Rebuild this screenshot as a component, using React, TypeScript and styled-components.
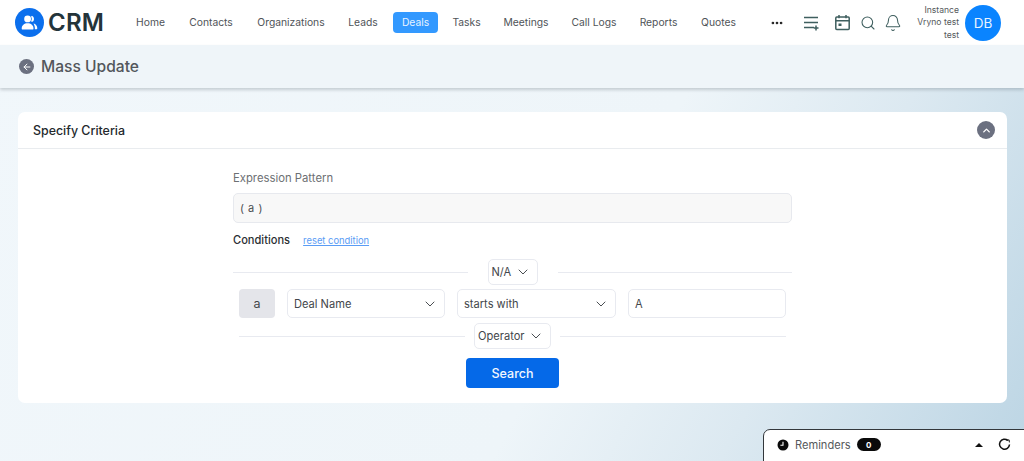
import React from 'react';
import styled, { createGlobalStyle } from 'styled-components';
import { ArrowLeft, Bell, ChevronDown, ChevronUp, MoreHorizontal, Search } from 'lucide-react';

const FONT = '"Inter", "Noto Sans", "Liberation Sans", sans-serif';

const GlobalStyle = createGlobalStyle`
  html, body { margin: 0; padding: 0; height: 100%; }
  body { font-family: ${FONT}; overflow: hidden; }
  * { box-sizing: border-box; }
`;

const Page = styled.div`
  position: relative;
  width: 1024px;
  height: 461px;
  overflow: hidden;
  background: linear-gradient(118deg, #f1f7fb 0%, #eef5f9 58%, #dce9f1 76%, #bcd5e4 100%);
`;

const Header = styled.header`
  display: flex;
  align-items: center;
  height: 45px;
  background: #fff;
  padding-left: 15px;
`;

const Brand = styled.div`
  display: flex;
  align-items: center;
  gap: 4px;
  width: 113px;
`;

const LogoMark = styled.div`
  width: 29px;
  height: 29px;
  border-radius: 50%;
  background: #0b6fed;
  display: flex;
  align-items: center;
  justify-content: center;
`;

const BrandName = styled.span`
  font-size: 24px;
  font-weight: 600;
  color: #24343a;
  letter-spacing: 0.2px;
`;

const Nav = styled.nav`
  display: flex;
  align-items: center;
  gap: 8px;
`;

const NavItem = styled.a<{ $active?: boolean; $w: number }>`
  display: flex;
  align-items: center;
  justify-content: center;
  width: ${({ $w }) => $w}px;
  height: 21px;
  padding-bottom: 1px;
  border-radius: 4px;
  font-size: 10.3px;
  white-space: nowrap;
  color: ${({ $active }) => ($active ? '#e8f3ff' : '#4f5458')};
  background: ${({ $active }) => ($active ? '#3399ff' : 'transparent')};
`;

const Tools = styled.div`
  display: flex;
  align-items: center;
  margin-left: 27px;
  color: #3f5f5f;
`;

const ToolIcon = styled.span<{ $gap: number }>`
  display: flex;
  margin-right: ${({ $gap }) => $gap}px;
`;

const UserName = styled.div`
  width: 57px;
  text-align: right;
  font-size: 8.6px;
  line-height: 12.5px;
  color: #55595c;
`;

const Avatar = styled.div`
  width: 36px;
  height: 36px;
  margin-left: 6px;
  border-radius: 50%;
  background: #0a84ff;
  color: #e8f3ff;
  font-size: 13.5px;
  display: flex;
  align-items: center;
  justify-content: center;
`;

const SubHeader = styled.div`
  display: flex;
  align-items: center;
  gap: 7px;
  height: 43px;
  padding-left: 19px;
  background: #eff5f9;
  box-shadow: 0 2px 3px rgba(90, 100, 110, 0.28);
`;

const BackButton = styled.div`
  width: 15px;
  height: 15px;
  border-radius: 50%;
  background: #6b7080;
  color: #fff;
  display: flex;
  align-items: center;
  justify-content: center;
`;

const Title = styled.h1`
  margin: 0;
  font-size: 15.6px;
  font-weight: 500;
  color: #53575c;
`;

const Card = styled.section`
  margin: 24px 17px 0 18px;
  height: 291px;
  background: #fff;
  border-radius: 7px;
`;

const CardHead = styled.div`
  display: flex;
  align-items: center;
  justify-content: space-between;
  height: 37px;
  padding: 0 12px 0 15px;
  border-bottom: 1px solid #e9ecef;
`;

const CardTitle = styled.h2`
  margin: 0;
  font-size: 12.4px;
  font-weight: 500;
  color: #23282c;
`;

const Collapse = styled.div`
  width: 18px;
  height: 18px;
  border-radius: 50%;
  background: #6b7080;
  color: #fff;
  display: flex;
  align-items: center;
  justify-content: center;
`;

const Form = styled.div`
  width: 559px;
  margin-left: 215px;
  padding-top: 22px;
`;

const FieldLabel = styled.div`
  font-size: 11.3px;
  line-height: 14px;
  color: #6d7073;
`;

const PatternBox = styled.div`
  display: flex;
  align-items: center;
  height: 30px;
  margin-top: 8px;
  padding-left: 6px;
  border: 1px solid #e7e9ee;
  border-radius: 5px;
  background: #f8f8f8;
  font-size: 11px;
  color: #4b4f52;
  word-spacing: 1px;
`;

const ConditionsHead = styled.div`
  display: flex;
  align-items: center;
  gap: 13px;
  margin-top: 9px;
  height: 16px;
`;

const ConditionsTitle = styled.span`
  font-size: 11.1px;
  font-weight: 500;
  color: #2b2f33;
`;

const ResetLink = styled.a`
  font-size: 9.4px;
  color: #5a9cf5;
  text-decoration: underline;
`;

const Divider = styled.div<{ $inset: number; $gap: number; $top: number; $right: number }>`
  display: flex;
  align-items: center;
  justify-content: center;
  gap: ${({ $gap }) => $gap}px;
  margin-top: ${({ $top }) => $top}px;
  padding-left: ${({ $inset }) => $inset}px;
  padding-right: ${({ $right }) => $right}px;
  &::before, &::after {
    content: '';
    flex: 1;
    height: 1px;
    background: #e8eaf0;
  }
`;

const SelectBox = styled.div<{ $w: number; $h?: number; $left?: number }>`
  display: flex;
  align-items: center;
  justify-content: space-between;
  flex: none;
  width: ${({ $w }) => $w}px;
  height: ${({ $h }) => $h ?? 29}px;
  padding: 0 6px 0 ${({ $left }) => $left ?? 6}px;
  border: 1px solid #e8eaf0;
  border-radius: 5px;
  background: #fff;
  font-size: 11.1px;
  color: #43474b;
`;

const ConditionRow = styled.div`
  display: flex;
  align-items: center;
  gap: 12px;
  margin: 4px 6px 5px;
`;

const RowKey = styled.div`
  width: 36px;
  height: 29px;
  border-radius: 4px;
  background: #e4e5ea;
  color: #43474b;
  font-size: 12.5px;
  display: flex;
  align-items: center;
  justify-content: center;
`;

const Actions = styled.div`
  display: flex;
  justify-content: center;
  margin-top: 9px;
`;

const SearchButton = styled.button`
  width: 93px;
  height: 30px;
  border: 0;
  border-radius: 4px;
  background: #0569e8;
  color: #f2f7ff;
  font: 500 12.5px ${FONT};
`;

const Reminders = styled.div`
  position: absolute;
  left: 763px;
  top: 429px;
  width: 262px;
  height: 33px;
  display: flex;
  align-items: center;
  padding: 0 13px 2px 13px;
  background: #fff;
  border: 1px solid #33373b;
  border-radius: 7px 0 0 0;
`;

const ReminderLabel = styled.span`
  margin-left: 6px;
  font-size: 11.1px;
  color: #56595c;
`;

const CountBadge = styled.span`
  width: 24px;
  height: 13px;
  margin-left: 6px;
  border-radius: 7px;
  background: #0a0a0a;
  color: #fff;
  font-size: 8px;
  font-weight: 700;
  display: flex;
  align-items: center;
  justify-content: center;
`;

const Caret = styled.span`
  margin-left: auto;
  margin-right: 15px;
  width: 0;
  height: 0;
  border-left: 4px solid transparent;
  border-right: 4px solid transparent;
  border-bottom: 4px solid #111;
`;

const navItems = [
  { label: 'Home', w: 45 },
  { label: 'Contacts', w: 60 },
  { label: 'Organizations', w: 84 },
  { label: 'Leads', w: 44 },
  { label: 'Deals', w: 45, active: true },
  { label: 'Tasks', w: 41 },
  { label: 'Meetings', w: 62 },
  { label: 'Call Logs', w: 58 },
  { label: 'Reports', w: 55 },
  { label: 'Quotes', w: 49 },
];

const LogoIcon = () => (
  <svg width="19" height="19" viewBox="0 0 20 20" fill="#fff">
    <circle cx="8" cy="6.2" r="3.6" />
    <path d="M1.8 16.5c0-3.6 2.6-5.6 6.2-5.6s6.2 2 6.2 5.6c0 .6-.4.9-1 .9H2.8c-.6 0-1-.3-1-.9z" />
    <path d="M12.6 2.9a3.6 3.6 0 0 1 0 6.6l-.9-.9a4.8 4.8 0 0 0 0-4.8z" />
    <path d="M14.2 11c2.4.5 4 2.4 4 5 0 .7-.4 1.2-1.1 1.2h-1.5c.3-2.4-.4-4.5-1.4-6.2z" />
  </svg>
);

const QueueIcon = () => (
  <svg width="18" height="18" viewBox="0 0 18 18" fill="none" stroke="currentColor" strokeWidth="1.3">
    <path d="M2 3.500h14M2 8.500h14M2 13.500h10" />
    <path d="M14 11.500v5M11.800 14h4.700" strokeWidth="1.500" />
  </svg>
);

const CalendarIcon = () => (
  <svg width="17" height="17" viewBox="0 0 17 17" fill="none" stroke="currentColor" strokeWidth="1.5">
    <rect x="1.8" y="3" width="13.4" height="12.5" rx="1" />
    <path d="M1.8 6.800h13.400M5 1v3.200M12 1v3.200" />
    <rect x="4.500" y="9.500" width="3" height="2.500" fill="currentColor" stroke="none" />
  </svg>
);

const ClockIcon = () => (
  <svg width="12" height="12" viewBox="0 0 12 12">
    <circle cx="6" cy="6" r="5.500" fill="#0a0a0a" />
    <path d="M6 2.800V6.300H3.400" fill="none" stroke="#fff" strokeWidth="1.100" />
  </svg>
);

const RefreshIcon = () => (
  <svg width="13" height="13" viewBox="0 0 13 13" fill="none" stroke="#111" strokeWidth="1.500">
    <path d="M9.800 2.400A5 5 0 1 0 11.500 6.500" />
    <path d="M8.500 2.300l2.600-.4.300 2.500" strokeWidth="1" />
  </svg>
);

const Chevron = () => <ChevronDown size={16} strokeWidth={1.5} color="#4a4e52" />;

export default function App() {
  return (
    <Page>
      <GlobalStyle />
      <Header>
        <Brand>
          <LogoMark>
            <LogoIcon />
          </LogoMark>
          <BrandName>CRM</BrandName>
        </Brand>
        <Nav>
          {navItems.map((item) => (
            <NavItem key={item.label} $w={item.w} $active={item.active}>
              {item.label}
            </NavItem>
          ))}
        </Nav>
        <Tools>
          <ToolIcon $gap={18}>
            <MoreHorizontal size={14} strokeWidth={2.6} color="#222" />
          </ToolIcon>
          <ToolIcon $gap={14}>
            <QueueIcon />
          </ToolIcon>
          <ToolIcon $gap={9}>
            <CalendarIcon />
          </ToolIcon>
          <ToolIcon $gap={8}>
            <Search size={16} strokeWidth={1.6} />
          </ToolIcon>
          <ToolIcon $gap={0}>
            <Bell size={18} strokeWidth={1.4} />
          </ToolIcon>
        </Tools>
        <UserName>
          Instance
          <br />
          Vryno test
          <br />
          test
        </UserName>
        <Avatar>DB</Avatar>
      </Header>
      <SubHeader>
        <BackButton>
          <ArrowLeft size={10} strokeWidth={2.4} />
        </BackButton>
        <Title>Mass Update</Title>
      </SubHeader>
      <Card>
        <CardHead>
          <CardTitle>Specify Criteria</CardTitle>
          <Collapse>
            <ChevronUp size={11} strokeWidth={3} />
          </Collapse>
        </CardHead>
        <Form>
          <FieldLabel>Expression Pattern</FieldLabel>
          <PatternBox>( a )</PatternBox>
          <ConditionsHead>
            <ConditionsTitle>Conditions</ConditionsTitle>
            <ResetLink>reset condition</ResetLink>
          </ConditionsHead>
          <Divider $inset={0} $gap={20} $top={11} $right={0}>
            <SelectBox $w={50} $h={26} $left={3}>
              N/A
              <Chevron />
            </SelectBox>
          </Divider>
          <ConditionRow>
            <RowKey>a</RowKey>
            <SelectBox $w={158}>
              Deal Name
              <Chevron />
            </SelectBox>
            <SelectBox $w={159}>
              starts with
              <Chevron />
            </SelectBox>
            <SelectBox $w={158}>A</SelectBox>
          </ConditionRow>
          <Divider $inset={6} $gap={9} $top={0} $right={6}>
            <SelectBox $w={77} $h={26} $left={3}>
              Operator
              <Chevron />
            </SelectBox>
          </Divider>
          <Actions>
            <SearchButton>Search</SearchButton>
          </Actions>
        </Form>
      </Card>
      <Reminders>
        <ClockIcon />
        <ReminderLabel>Reminders</ReminderLabel>
        <CountBadge>0</CountBadge>
        <Caret />
        <RefreshIcon />
      </Reminders>
    </Page>
  );
}
